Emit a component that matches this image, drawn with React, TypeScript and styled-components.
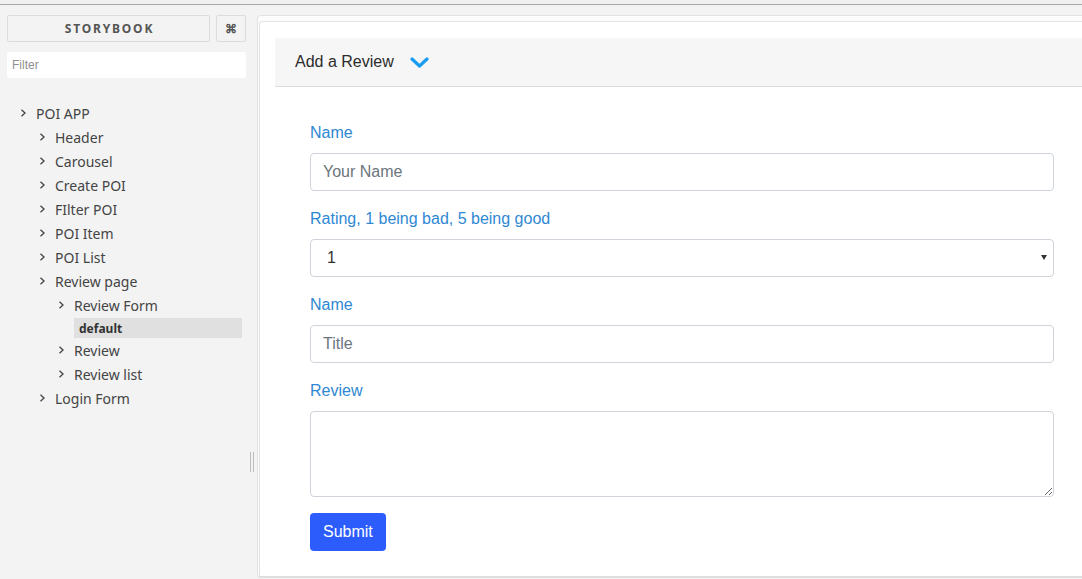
import React from "react";
import styled, { createGlobalStyle } from "styled-components";

const GlobalStyle = createGlobalStyle`
  html, body { margin: 0; padding: 0; background: #f3f3f3; }
  body { overflow: hidden; }
  * { box-sizing: border-box; }
`;

const Root = styled.div`
  width: 1082px;
  height: 579px;
  overflow: hidden;
  display: flex;
  flex-direction: column;
  background: #f3f3f3;
`;

const TopStrip = styled.div`
  height: 5px;
  flex: none;
  background: #f0f0f0;
  border-bottom: 1px solid #a9a9a9;
`;

const Layout = styled.div`
  flex: 1;
  display: flex;
  min-height: 0;
`;

const Sidebar = styled.aside`
  width: 250px;
  flex: none;
  padding: 10px 4px 0 7px;
  font-family: "Noto Sans", "Open Sans", sans-serif;
`;

const BrandRow = styled.div`
  display: flex;
  gap: 6px;
  height: 27px;
`;

const BrandButton = styled.div<{ $w?: number }>`
  flex: ${(p) => (p.$w ? "none" : "1")};
  width: ${(p) => (p.$w ? `${p.$w}px` : "auto")};
  border: 1px solid #dcdcdc;
  border-radius: 2px;
  display: flex;
  align-items: center;
  justify-content: center;
  font-size: 12px;
  font-weight: 700;
  letter-spacing: ${(p) => (p.$w ? "0" : "1.8px")};
  padding-left: ${(p) => (p.$w ? "0" : "2px")};
  color: #555;
`;

const FilterInput = styled.input`
  display: block;
  width: 100%;
  height: 26px;
  margin-top: 10px;
  border: none;
  border-radius: 2px;
  background: #fff;
  padding: 0 5px;
  font-family: "Liberation Sans", Arial, sans-serif;
  font-size: 12px;
  color: #333;
  outline: none;
  &::placeholder { color: #8f8f8f; }
`;

const Tree = styled.ul`
  list-style: none;
  margin: 23px 0 0;
  padding: 0;
`;

const Row = styled.li<{ $depth: number }>`
  display: flex;
  align-items: center;
  height: 24px;
  padding-left: ${(p) => 13 + p.$depth * 19}px;
  font-size: 14px;
  color: #444;
  white-space: nowrap;
`;

const Arrow = styled.svg`
  width: 7px;
  height: 8px;
  margin-right: 9px;
  flex: none;
`;

const Selected = styled.li<{ $depth: number }>`
  display: flex;
  align-items: center;
  height: 20px;
  margin: 1px 4px 0 ${(p) => 10 + p.$depth * 19}px;
  padding-left: 5px;
  background: #e0e0e0;
  font-size: 12px;
  font-weight: 700;
  color: #333;
`;

const Resizer = styled.div`
  width: 7px;
  flex: none;
  padding-top: 447px;
`;

const Grip = styled.div`
  width: 4px;
  height: 20px;
  border-left: 1px solid #bdbdbd;
  border-right: 1px solid #bdbdbd;
`;

const PanelColumn = styled.div`
  flex: none;
  width: 850px;
  padding: 10px 0 1px;
  display: flex;
`;

const Panel = styled.div`
  flex: 1;
  border: 1px solid #e2e2e2;
  border-bottom: 2px solid #dedede;
  border-radius: 4px;
  background: #fcfcfc;
  padding-top: 5px;
  display: flex;
`;

const Frame = styled.div`
  flex: 1;
  margin-left: 1px;
  border-top: 1px solid #e3e3e3;
  border-left: 1px solid #e3e3e3;
  border-top-left-radius: 4px;
  background: #fff;
  padding: 16px 16px 0 15px;
  font-family: "Liberation Sans", Arial, sans-serif;
`;

const CardHeader = styled.div`
  height: 49px;
  display: flex;
  align-items: center;
  gap: 16px;
  padding: 0 20px;
  background: #f6f6f6;
  border-bottom: 1px solid #dcdcdc;
  font-size: 16px;
  color: #2b2b2b;
`;

const Form = styled.form`
  padding: 34px 36px 0 35px;
  display: flex;
  flex-direction: column;
  align-items: flex-start;
`;

const Group = styled.div`
  width: 100%;
  margin-bottom: 16px;
`;

const SelectWrap = styled.div`
  position: relative;
`;

const SelectCaret = styled.span`
  position: absolute;
  right: 7px;
  top: 16px;
  width: 0;
  height: 0;
  border-left: 3px solid transparent;
  border-right: 3px solid transparent;
  border-top: 5px solid #333;
  pointer-events: none;
`;

const Label = styled.label`
  display: block;
  font-size: 16px;
  line-height: 24px;
  color: #2f88d3;
  margin-bottom: 8px;
`;

const fieldCss = `
  display: block;
  width: 100%;
  font-family: "Liberation Sans", Arial, sans-serif;
  font-size: 16px;
  line-height: 24px;
  color: #495057;
  background: #fff;
  border: 1px solid #ced4da;
  border-radius: 4px;
  padding: 6px 12px;
  outline: none;
  &::placeholder { color: #6c757d; }
`;

const TextInput = styled.input`
  ${fieldCss}
  height: 38px;
`;

const Select = styled.select`
  ${fieldCss}
  appearance: none;
  -webkit-appearance: none;
  height: 38px;
  padding-left: 16px;
  color: #333;
`;

const TextArea = styled.textarea`
  ${fieldCss}
  height: 86px;
  resize: vertical;
`;

const SubmitButton = styled.button`
  height: 38px;
  padding: 6px 13px;
  border: none;
  border-radius: 4px;
  background: #2d5cfd;
  color: #fff;
  font-family: "Liberation Sans", Arial, sans-serif;
  font-size: 16px;
  line-height: 24px;
`;

const Chevron = () => (
  <svg width="19" height="13" viewBox="0 0 19 13">
    <polyline points="2,3 9.5,10 17,3" fill="none" stroke="#1b9cf0" strokeWidth="3.2" strokeLinecap="round" strokeLinejoin="round" />
  </svg>
);

const TreeArrow = () => (
  <Arrow viewBox="0 0 7 8">
    <polyline points="1.5,0.8 5,4 1.5,7.2" fill="none" stroke="#444" strokeWidth="1.3" />
  </Arrow>
);

const items: { label: string; depth: number; selected?: boolean }[] = [
  { label: "POI APP", depth: 0 },
  { label: "Header", depth: 1 },
  { label: "Carousel", depth: 1 },
  { label: "Create POI", depth: 1 },
  { label: "FIlter POI", depth: 1 },
  { label: "POI Item", depth: 1 },
  { label: "POI List", depth: 1 },
  { label: "Review page", depth: 1 },
  { label: "Review Form", depth: 2 },
  { label: "default", depth: 3, selected: true },
  { label: "Review", depth: 2 },
  { label: "Review list", depth: 2 },
  { label: "Login Form", depth: 1 },
];

export default function App() {
  return (
    <Root>
      <GlobalStyle />
      <TopStrip />
      <Layout>
        <Sidebar>
          <BrandRow>
            <BrandButton>STORYBOOK</BrandButton>
            <BrandButton $w={30}>⌘</BrandButton>
          </BrandRow>
          <FilterInput placeholder="Filter" />
          <Tree>
            {items.map((it) =>
              it.selected ? (
                <Selected key={it.label} $depth={it.depth}>{it.label}</Selected>
              ) : (
                <Row key={it.label} $depth={it.depth}>
                  <TreeArrow />
                  {it.label}
                </Row>
              )
            )}
          </Tree>
        </Sidebar>
        <Resizer>
          <Grip />
        </Resizer>
        <PanelColumn>
          <Panel>
            <Frame>
              <CardHeader>
                Add a Review
                <Chevron />
              </CardHeader>
              <Form onSubmit={(e) => e.preventDefault()}>
                <Group>
                  <Label>Name</Label>
                  <TextInput placeholder="Your Name" />
                </Group>
                <Group>
                  <Label>Rating, 1 being bad, 5 being good</Label>
                  <SelectWrap>
                    <Select defaultValue="1">
                      <option value="1">1</option>
                      <option value="2">2</option>
                      <option value="3">3</option>
                      <option value="4">4</option>
                      <option value="5">5</option>
                    </Select>
                    <SelectCaret />
                  </SelectWrap>
                </Group>
                <Group>
                  <Label>Name</Label>
                  <TextInput placeholder="Title" />
                </Group>
                <Group>
                  <Label>Review</Label>
                  <TextArea rows={3} />
                </Group>
                <SubmitButton type="submit">Submit</SubmitButton>
              </Form>
            </Frame>
          </Panel>
        </PanelColumn>
      </Layout>
    </Root>
  );
}
